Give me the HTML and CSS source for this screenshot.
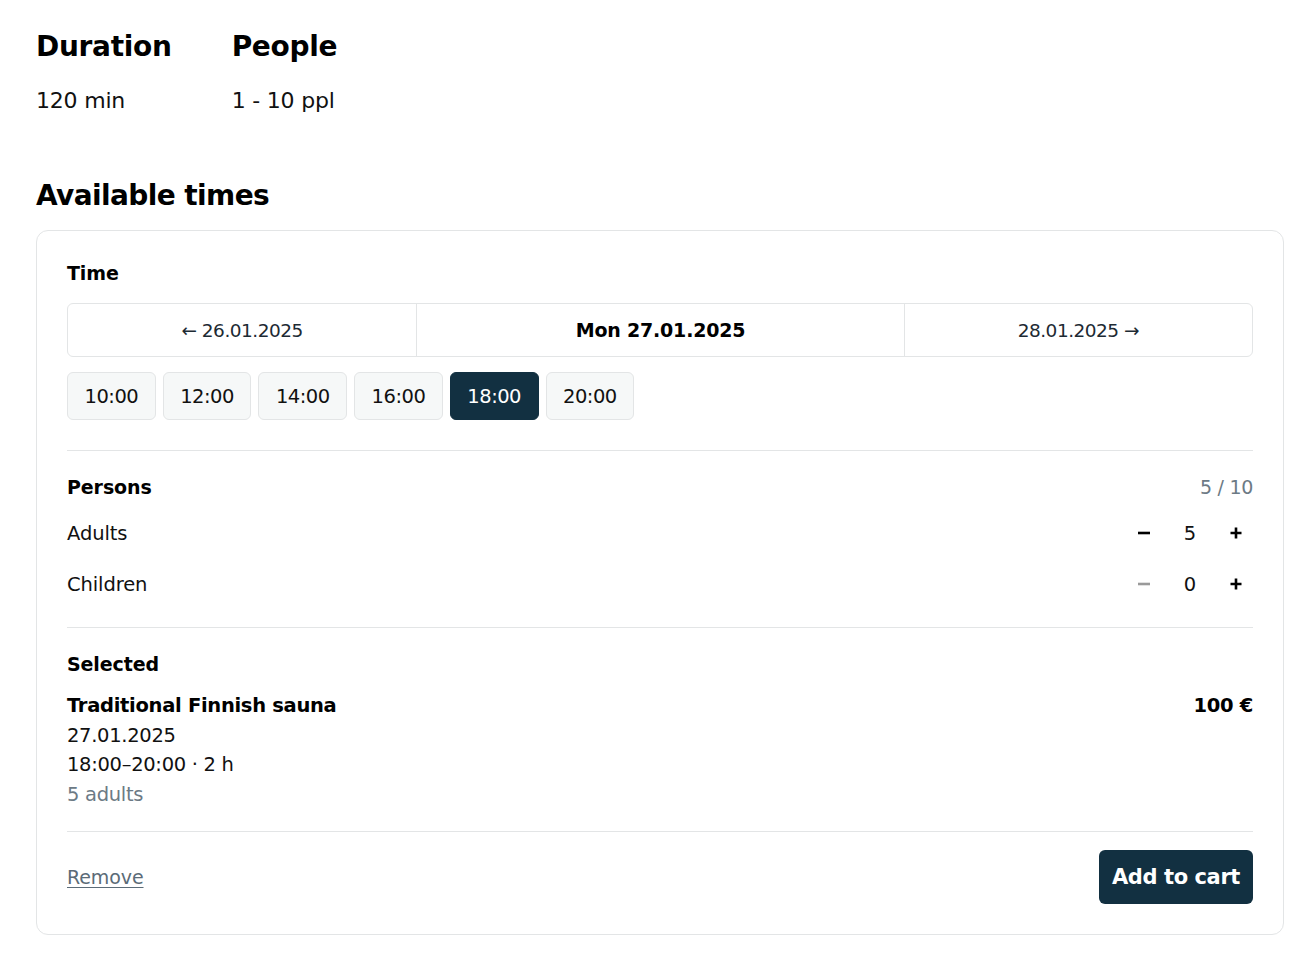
FILE: index.html
```html
<!DOCTYPE html>
<html lang="en">
<head>
<meta charset="utf-8">
<title>Booking</title>
<link rel="stylesheet" href="styles.css">
</head>
<body>
<div class="page">
  <div class="facts">
    <div class="fact">
      <h2 class="fact-title">Duration</h2>
      <div class="fact-value">120 min</div>
    </div>
    <div class="fact">
      <h2 class="fact-title">People</h2>
      <div class="fact-value">1 - 10 ppl</div>
    </div>
  </div>

  <h2 class="section-title">Available times</h2>

  <div class="card">
    <div class="label">Time</div>
    <div class="date-nav">
      <button class="date-cell">← 26.01.2025</button>
      <div class="date-cell current">Mon 27.01.2025</div>
      <button class="date-cell">28.01.2025 →</button>
    </div>
    <div class="slots">
      <button class="slot">10:00</button>
      <button class="slot">12:00</button>
      <button class="slot">14:00</button>
      <button class="slot">16:00</button>
      <button class="slot active">18:00</button>
      <button class="slot">20:00</button>
    </div>

    <div class="section persons">
      <div class="row head">
        <div class="label">Persons</div>
        <div class="muted">5 / 10</div>
      </div>
      <div class="row counter-row">
        <div class="row-label">Adults</div>
        <div class="counter">
          <button class="ctrl"><svg width="14" height="14" viewBox="0 0 14 14"><path d="M1 7h12" stroke="currentColor" stroke-width="2.6"/></svg></button>
          <span class="count">5</span>
          <button class="ctrl"><svg width="14" height="14" viewBox="0 0 14 14"><path d="M1.5 7h11M7 1.5v11" stroke="currentColor" stroke-width="2.6"/></svg></button>
        </div>
      </div>
      <div class="row counter-row">
        <div class="row-label">Children</div>
        <div class="counter">
          <button class="ctrl disabled"><svg width="14" height="14" viewBox="0 0 14 14"><path d="M1 7h12" stroke="currentColor" stroke-width="2.6"/></svg></button>
          <span class="count">0</span>
          <button class="ctrl"><svg width="14" height="14" viewBox="0 0 14 14"><path d="M1.5 7h11M7 1.5v11" stroke="currentColor" stroke-width="2.6"/></svg></button>
        </div>
      </div>
    </div>

    <div class="section selected">
      <div class="label">Selected</div>
      <div class="sel-item">
        <div class="sel-info">
          <div class="sel-name">Traditional Finnish sauna</div>
          <div>27.01.2025</div>
          <div>18:00–20:00 · 2 h</div>
          <div class="muted">5 adults</div>
        </div>
        <div class="price">100 €</div>
      </div>
    </div>

    <div class="section footer">
      <a href="#" class="remove">Remove</a>
      <button class="cart">Add to cart</button>
    </div>
  </div>
</div>
</body>
</html>
```

FILE: styles.css
```css
* { box-sizing: border-box; }
html, body { margin: 0; padding: 0; background: #fff; }
body {
  font-family: "DejaVu Sans", "Noto Sans", sans-serif;
  color: #111;
}
button { font-family: inherit; cursor: pointer; }

.page {
  padding: 29px 24px 22px 36px;
}

.facts {
  display: flex;
  gap: 60px;
}
.fact-title {
  margin: 0;
  font-size: 28px;
  line-height: 36px;
  font-weight: 700;
  color: #000;
  letter-spacing: -0.3px;
}
.fact-value {
  margin-top: 21px;
  font-size: 22px;
  line-height: 30px;
  letter-spacing: -0.2px;
}

.section-title {
  margin: 62px 0 16px;
  font-size: 28px;
  line-height: 36px;
  font-weight: 700;
  color: #000;
  letter-spacing: -0.6px;
}

.card {
  border: 1px solid #e3e5e6;
  border-radius: 12px;
  padding: 28px 30px 30px;
}

.label {
  font-size: 19px;
  line-height: 28px;
  font-weight: 700;
  color: #000;
  letter-spacing: -0.1px;
}

.date-nav {
  margin-top: 16px;
  display: grid;
  grid-template-columns: 1fr 1.4fr 1fr;
  border: 1px solid #e3e5e6;
  border-radius: 6px;
  height: 54px;
}
.date-cell {
  display: flex;
  align-items: center;
  justify-content: center;
  background: transparent;
  border: 0;
  padding: 0;
  font-size: 18.5px;
  color: #1d2a33;
  letter-spacing: -0.5px;
}
.date-cell + .date-cell { border-left: 1px solid #e3e5e6; }
.date-cell.current {
  font-weight: 700;
  color: #000;
  font-size: 19px;
  letter-spacing: -0.2px;
}

.slots {
  margin-top: 15px;
  display: flex;
  gap: 7px;
}
.slot {
  height: 48px;
  padding: 0 16.5px;
  background: #f6f8f8;
  border: 1px solid #e3e5e6;
  border-radius: 6px;
  font-size: 19.5px;
  color: #111;
  letter-spacing: -0.5px;
}
.slot.active {
  background: #123041;
  border-color: #123041;
  color: #fff;
}

.section {
  border-top: 1px solid #e3e5e6;
}
.persons {
  margin-top: 30px;
  padding-top: 22px;
  padding-bottom: 26px;
}
.row {
  display: flex;
  align-items: center;
  justify-content: space-between;
}
.muted { color: #6c7a85; }
.head .muted { font-size: 19px; letter-spacing: -0.3px; }
.counter-row {
  height: 34px;
  margin-top: 15px;
}
.counter-row + .counter-row { margin-top: 17px; }
.row-label {
  font-size: 19.5px;
  letter-spacing: -0.1px;
}
.counter {
  display: flex;
  align-items: center;
  gap: 12px;
}
.ctrl {
  width: 34px;
  height: 34px;
  display: flex;
  align-items: center;
  justify-content: center;
  padding: 0;
  border: 0;
  background: transparent;
  color: #000;
}
.ctrl.disabled { color: #9a9a9a; }
.count {
  width: 34px;
  text-align: center;
  font-size: 19.5px;
}

.selected {
  padding-top: 22px;
  padding-bottom: 22px;
}
.sel-item {
  margin-top: 13px;
  display: flex;
  justify-content: space-between;
  align-items: flex-start;
  font-size: 19.5px;
  line-height: 29.5px;
  letter-spacing: -0.3px;
}
.sel-name, .price {
  font-weight: 700;
  color: #000;
  font-size: 19.5px;
}

.footer {
  padding-top: 18px;
  display: flex;
  align-items: center;
  justify-content: space-between;
}
.remove {
  font-size: 19px;
  color: #5b6b77;
  text-decoration: underline;
  text-underline-offset: 3px;
  text-decoration-thickness: 1px;
  letter-spacing: -0.1px;
}
.cart {
  height: 54px;
  padding: 0 13px;
  background: #123041;
  color: #fff;
  border: 0;
  border-radius: 6px;
  font-size: 21px;
  font-weight: 700;
  letter-spacing: -0.4px;
}
```
